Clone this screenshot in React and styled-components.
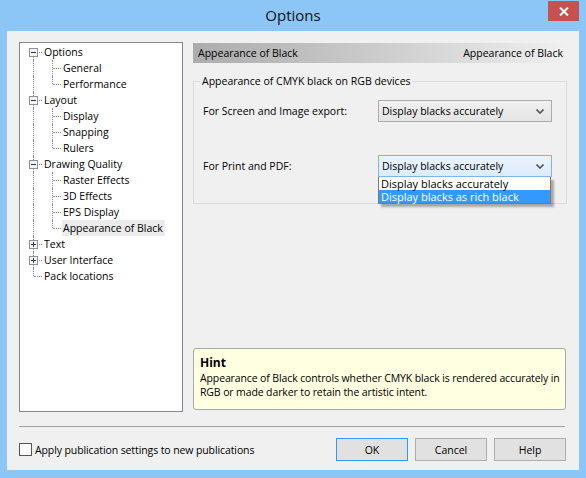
import React from 'react';
import styled, { createGlobalStyle } from 'styled-components';

const GlobalStyle = createGlobalStyle`
  html, body {
    margin: 0;
    padding: 0;
    overflow: hidden;
    background: #8cc6f7;
  }
  body {
    font-family: "Open Sans", "Noto Sans", sans-serif;
    font-size: 10.5px;
    color: #000;
  }
`;

const ui = {
  frame: '#8cc6f7',
  face: '#f0f0f0',
  treeBorder: '#828790',
  dots: '#8f8f8f',
  focus: '#3399ff',
};

const Window = styled.div`
  width: 586px;
  height: 478px;
  box-sizing: border-box;
  background: ${ui.frame};
  display: flex;
  flex-direction: column;
`;

const TitleBar = styled.div`
  height: 31px;
  display: grid;
  grid-template-columns: 1fr auto 1fr;
  align-items: start;
`;

const Title = styled.div`
  grid-column: 2;
  margin-top: 5px;
  font-size: 15px;
  line-height: 20px;
  color: #111;
`;

const CloseButton = styled.div`
  grid-column: 3;
  justify-self: end;
  margin: 1px 7px 0 0;
  width: 31px;
  height: 20px;
  background: #c75050;
  display: flex;
  align-items: center;
  justify-content: center;
`;

const Client = styled.div`
  flex: 1;
  margin: 0 7px 8px;
  background: ${ui.face};
  padding: 11px 10px 9px 12px;
  display: flex;
  flex-direction: column;
  min-width: 0;
`;

const Main = styled.div`
  display: flex;
  gap: 10px;
  height: 370px;
`;

const TreePanel = styled.div`
  flex: none;
  width: 164px;
  box-sizing: border-box;
  border: 1px solid ${ui.treeBorder};
  background: #fff;
  padding: 1px 0 0 4px;
`;

const TreeRow = styled.div`
  display: flex;
  align-items: center;
  height: 16px;
`;

const Cell = styled.div`
  position: relative;
  width: 19px;
  height: 16px;
  flex: none;
  &::before {
    content: '';
    display: ${({ $v }) => ($v === 'none' ? 'none' : 'block')};
    position: absolute;
    left: 9px;
    top: ${({ $v }) => ($v === 'bottom' ? '8px' : '0')};
    bottom: ${({ $v }) => ($v === 'top' ? '8px' : '0')};
    border-left: 1px dotted ${ui.dots};
  }
  &::after {
    content: '';
    display: ${({ $branch }) => ($branch ? 'block' : 'none')};
    position: absolute;
    left: 10px;
    width: 8px;
    top: 8px;
    border-top: 1px dotted ${ui.dots};
  }
`;

const Expander = styled.svg`
  position: absolute;
  left: 5px;
  top: 4px;
  z-index: 1;
`;

const NodeLabel = styled.span`
  padding: 0 2px 0 1px;
  line-height: 16px;
  white-space: nowrap;
  background: ${({ $selected }) => ($selected ? '#ebebeb' : 'transparent')};
`;

const RightPanel = styled.div`
  flex: 1;
  min-width: 0;
  display: flex;
  flex-direction: column;
`;

const PageHeader = styled.div`
  margin-top: 1px;
  height: 20px;
  padding: 0 6px 0 5px;
  display: flex;
  align-items: center;
  justify-content: space-between;
  background: linear-gradient(to right, #acacac, #c9c9c9 45%, #f0f0f0);
`;

const GroupBox = styled.fieldset`
  margin: 10px 2px 0 0;
  padding: 11px 0 26px 9px;
  border: 1px solid #dcdcdc;
  display: flex;
  flex-direction: column;
  gap: 33px;
  min-width: 0;
`;

const Legend = styled.legend`
  margin-left: -2px;
  padding: 0 1px;
  line-height: 16px;
`;

const FieldRow = styled.div`
  display: flex;
  align-items: center;
`;

const FieldLabel = styled.div`
  width: 175px;
`;

const SelectWrap = styled.div`
  position: relative;
  width: 174px;
`;

const Select = styled.div`
  height: 22px;
  box-sizing: border-box;
  border: 1px solid ${({ $open }) => ($open ? '#7eb4ea' : '#acacac')};
  background: ${({ $open }) =>
    $open
      ? 'linear-gradient(#ecf4fc, #dcecfc)'
      : 'linear-gradient(#f0f0f0, #e5e5e5)'};
  padding: 0 7px 0 3px;
  display: flex;
  align-items: center;
  justify-content: space-between;
`;

const DropList = styled.div`
  position: absolute;
  left: 0;
  top: 100%;
  width: 173px;
  box-sizing: border-box;
  border: 1px solid #7a7a7a;
  border-top: none;
  background: #fff;
  box-shadow: 3px 3px 2px rgba(0, 0, 0, 0.3);
  z-index: 2;
`;

const DropItem = styled.div`
  height: 13px;
  line-height: 13px;
  padding-left: 2px;
  font-size: 11px;
  background: ${({ $active }) => ($active ? ui.focus : '#fff')};
  color: ${({ $active }) => ($active ? '#fff' : '#000')};
  white-space: nowrap;
`;

const Hint = styled.div`
  margin: auto 3px 2px 0;
  height: 62px;
  box-sizing: border-box;
  border: 1px solid #a8a8a8;
  border-radius: 3px;
  background: #ffffe1;
  padding: 5px 6px;
`;

const HintTitle = styled.div`
  font-weight: bold;
  font-size: 12px;
  line-height: 17px;
`;

const HintText = styled.div`
  line-height: 14px;
  letter-spacing: -0.12px;
  white-space: nowrap;
`;

const Separator = styled.div`
  margin: 14px 4px 0 0;
  height: 1px;
  background: #a0a0a0;
`;

const Footer = styled.div`
  margin-top: 11px;
  display: flex;
  align-items: center;
  height: 23px;
  padding-right: 3px;
`;

const CheckLabel = styled.label`
  display: flex;
  align-items: center;
  gap: 3px;
  flex: 1;
  letter-spacing: -0.1px;
`;

const CheckBox = styled.span`
  width: 13px;
  height: 13px;
  box-sizing: border-box;
  border: 1px solid #555;
  background: #fff;
`;

const Buttons = styled.div`
  display: flex;
  gap: 7px;
`;

const Button = styled.div`
  width: 72px;
  height: 23px;
  box-sizing: border-box;
  border: 1px solid ${({ $default }) => ($default ? ui.focus : '#adadad')};
  background: #e1e1e1;
  display: flex;
  align-items: center;
  justify-content: center;
`;

const Chevron = () => (
  <svg width="8" height="5" viewBox="0 0 8 5">
    <path d="M0.5 0.5 L4 4 L7.5 0.5" fill="none" stroke="#555" strokeWidth="1.6" />
  </svg>
);

const Box = ({ plus }) => (
  <Expander width="9" height="9" viewBox="0 0 9 9">
    <rect x="0.5" y="0.5" width="8" height="8" fill="#f5f5f5" stroke="#919191" />
    <path d="M2 4.5 H7" stroke="#1f3b63" />
    {plus && <path d="M4.5 2 V7" stroke="#1f3b63" />}
  </Expander>
);

const tree = [
  { label: 'Options', open: true, children: ['General', 'Performance'] },
  { label: 'Layout', open: true, children: ['Display', 'Snapping', 'Rulers'] },
  {
    label: 'Drawing Quality',
    open: true,
    children: ['Raster Effects', '3D Effects', 'EPS Display', 'Appearance of Black'],
  },
  { label: 'Text', open: false, children: [] },
  { label: 'User Interface', open: false, children: [] },
  { label: 'Pack locations' },
];

const selected = 'Appearance of Black';

function Tree() {
  const rows = [];
  tree.forEach((node, i) => {
    const last = i === tree.length - 1;
    rows.push(
      <TreeRow key={node.label}>
        <Cell $v={i === 0 ? 'bottom' : last ? 'top' : 'full'} $branch>
          {node.children && <Box plus={!node.open} />}
        </Cell>
        <NodeLabel $selected={node.label === selected}>{node.label}</NodeLabel>
      </TreeRow>
    );
    if (node.open) {
      node.children.forEach((child, j) => {
        rows.push(
          <TreeRow key={child}>
            <Cell $v={last ? 'none' : 'full'} />
            <Cell $v={j === node.children.length - 1 ? 'top' : 'full'} $branch />
            <NodeLabel $selected={child === selected}>{child}</NodeLabel>
          </TreeRow>
        );
      });
    }
  });
  return <TreePanel>{rows}</TreePanel>;
}

export default function App() {
  return (
    <>
      <GlobalStyle />
      <Window>
        <TitleBar>
          <Title>Options</Title>
          <CloseButton>
            <svg width="10" height="9" viewBox="0 0 10 9">
              <path d="M1 0.5 L9 8.5 M9 0.5 L1 8.5" stroke="#fff" strokeWidth="2" />
            </svg>
          </CloseButton>
        </TitleBar>
        <Client>
          <Main>
            <Tree />
            <RightPanel>
              <PageHeader>
                <span>Appearance of Black</span>
                <span>Appearance of Black</span>
              </PageHeader>
              <GroupBox>
                <Legend>Appearance of CMYK black on RGB devices</Legend>
                <FieldRow>
                  <FieldLabel>For Screen and Image export:</FieldLabel>
                  <SelectWrap>
                    <Select>
                      <span>Display blacks accurately</span>
                      <Chevron />
                    </Select>
                  </SelectWrap>
                </FieldRow>
                <FieldRow>
                  <FieldLabel>For Print and PDF:</FieldLabel>
                  <SelectWrap>
                    <Select $open>
                      <span>Display blacks accurately</span>
                      <Chevron />
                    </Select>
                    <DropList>
                      <DropItem>Display blacks accurately</DropItem>
                      <DropItem $active>Display blacks as rich black</DropItem>
                    </DropList>
                  </SelectWrap>
                </FieldRow>
              </GroupBox>
              <Hint>
                <HintTitle>Hint</HintTitle>
                <HintText>
                  Appearance of Black controls whether CMYK black is rendered accurately in
                  <br />
                  RGB or made darker to retain the artistic intent.
                </HintText>
              </Hint>
            </RightPanel>
          </Main>
          <Separator />
          <Footer>
            <CheckLabel>
              <CheckBox />
              Apply publication settings to new publications
            </CheckLabel>
            <Buttons>
              <Button $default>OK</Button>
              <Button>Cancel</Button>
              <Button>Help</Button>
            </Buttons>
          </Footer>
        </Client>
      </Window>
    </>
  );
}
